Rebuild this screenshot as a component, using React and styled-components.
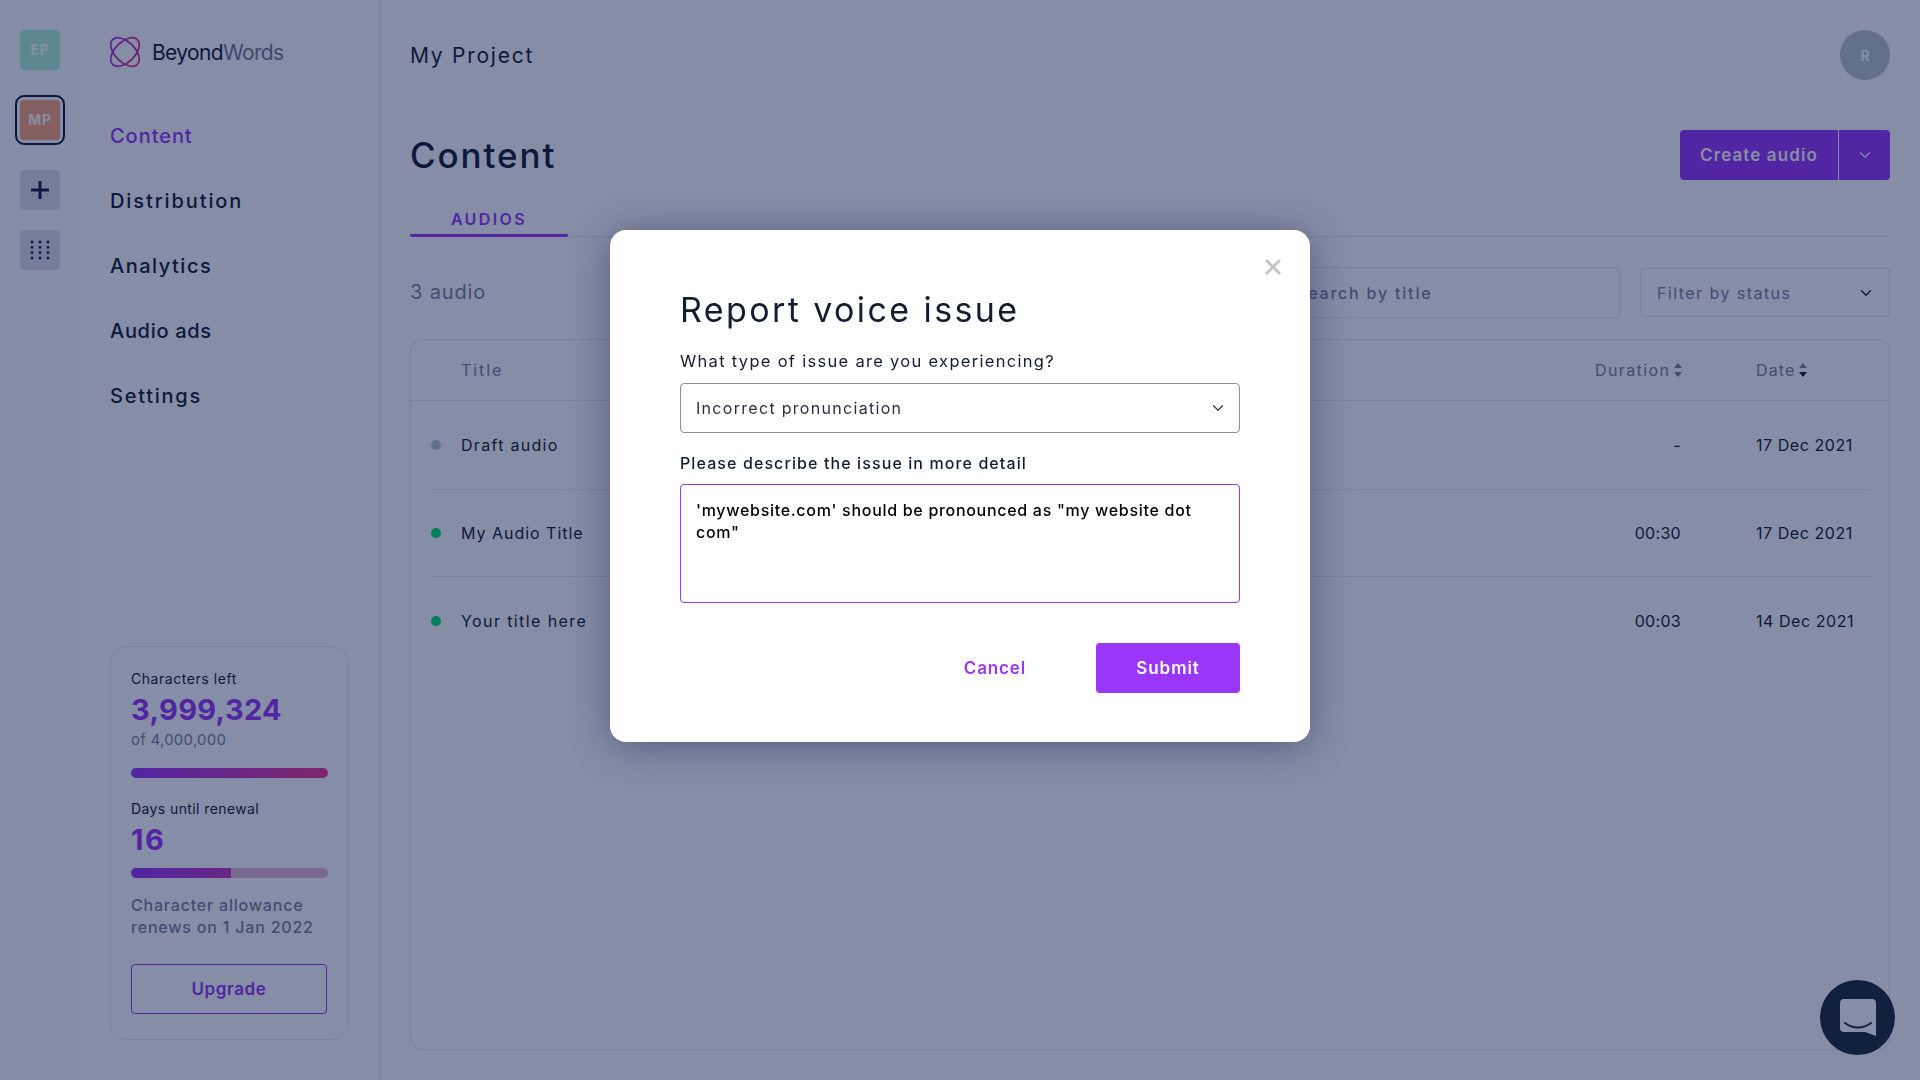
import React from "react";
import styled, { createGlobalStyle } from "styled-components";
import { ChevronDown, X } from "lucide-react";

const FONT = `Inter, "Noto Sans", sans-serif`;
const DARK = "#141c30";
const GREY = "#7c829b";
const PURPLE = "#9a36f8";

const Global = createGlobalStyle`
  html, body { margin: 0; padding: 0; height: 100%; }
  body { font-family: ${FONT}; color: ${DARK}; background: #fff; }
  * { box-sizing: border-box; }
`;

const Page = styled.div`display: flex; width: 1920px; height: 1080px; overflow: hidden;`;

const Rail = styled.aside`
  width: 80px; flex: none; display: flex; flex-direction: column; align-items: center;
  padding-top: 30px; background: #fdfdfe;
`;
const Tile = styled.div`
  width: 40px; height: 40px; border-radius: 4px; display: flex; align-items: center; justify-content: center;
  background: ${p => p.$bg || "#e0e0ea"}; color: #fff; font-size: 14px; font-weight: 700; letter-spacing: .6px;
  margin-top: ${p => p.$mt || 0}px; padding-bottom: 1px;
  outline: ${p => (p.$selected ? `2px solid #0f1a3a` : "none")};
  outline-offset: 3px;
`;

const Side = styled.nav`
  width: 300px; flex: none; display: flex; flex-direction: column; padding: 36px 30px 40px 30px;
  border-right: 1px solid #e3e5ee;
`;
const Logo = styled.div`display: flex; align-items: center; gap: 12px; height: 32px;`;
const LogoText = styled.div`font-size: 21px; letter-spacing: -.64px; color: ${DARK}; span { color: #727896; }`;
const NavList = styled.div`display: flex; flex-direction: column; gap: 35px; margin-top: 53px;`;
const NavItem = styled.div`
  font-size: 20px; line-height: 30px; letter-spacing: ${p => p.$ls}px; font-weight: 450;
  color: ${p => (p.$active ? PURPLE : DARK)};
`;

const Usage = styled.section`
  margin-top: auto; width: 239px; height: 394px; border: 1px solid #e9eaf1; border-radius: 18px;
  padding: 22px 20px 0; display: flex; flex-direction: column;
`;
const UsageLabel = styled.div`
  font-size: 14px; line-height: 20px; color: ${DARK}; letter-spacing: ${p => p.$ls}px; margin-top: ${p => p.$mt || 0}px;
`;
const BigNum = styled.div`
  font-size: 29px; line-height: 36px; font-weight: 700; color: ${PURPLE}; letter-spacing: ${p => p.$ls}px; margin-top: ${p => p.$mt}px;
`;
const OfText = styled.div`font-size: 15px; line-height: 20px; color: ${GREY}; letter-spacing: .25px; margin-top: 2px;`;
const Track = styled.div`
  height: 10px; width: 197px; border-radius: 5px; overflow: hidden; margin-top: ${p => p.$mt}px;
  background: #e4b8d0;
`;
const Fill = styled.div`height: 100%; background: linear-gradient(90deg, #9a36f8 0, #f0388c 197px);`;
const RenewNote = styled.div`font-size: 16px; line-height: 22px; color: ${GREY}; font-weight: 500; letter-spacing: .8px; margin-top: 16px;`;
const Upgrade = styled.div`
  margin-top: 26px; width: 196px; height: 50px; border: 1px solid ${PURPLE}; border-radius: 4px;
  display: flex; align-items: center; justify-content: center; color: ${PURPLE}; font-size: 17px; font-weight: 600; letter-spacing: .6px;
`;

const Main = styled.main`flex: 1; min-width: 0; padding: 30px 30px 30px; display: flex; flex-direction: column;`;
const TopBar = styled.header`display: flex; justify-content: space-between; align-items: center; height: 50px;`;
const Project = styled.div`font-size: 21px; letter-spacing: 1.75px; color: ${DARK};`;
const Avatar = styled.div`
  width: 50px; height: 50px; border-radius: 50%; background: #bcc6ca; color: #fff; font-weight: 700; font-size: 14px;
  display: flex; align-items: center; justify-content: center;
`;
const HeadRow = styled.div`display: flex; justify-content: space-between; align-items: center; height: 50px; margin-top: 50px;`;
const H1 = styled.h1`margin: 0; font-size: 35px; font-weight: 500; letter-spacing: 1.9px; color: ${DARK};`;
const SplitButton = styled.div`
  display: flex; height: 50px; width: 210px; background: ${PURPLE}; border-radius: 4px; color: #fff; overflow: hidden;
`;
const SplitMain = styled.div`
  width: 159px; display: flex; align-items: center; justify-content: center; font-size: 17px; font-weight: 600; letter-spacing: 1.1px;
  border-right: 1px solid #fff;
`;
const SplitArrow = styled.div`flex: 1; display: flex; align-items: center; justify-content: center;`;

const Tabs = styled.div`display: flex; height: 37px; margin-top: 20px; border-bottom: 1px solid #e3e5ee;`;
const Tab = styled.div`
  width: 158px; height: 37px; text-align: center; font-size: 16px; line-height: 38px; font-weight: 600; letter-spacing: 2.4px;
  color: ${PURPLE}; border-bottom: 3px solid ${PURPLE}; border-radius: 0 0 2px 2px;
`;
const ToolRow = styled.div`display: flex; align-items: center; height: 51px; margin-top: 30px;`;
const Count = styled.div`font-size: 20px; color: ${GREY}; letter-spacing: .85px; margin-right: auto; padding-bottom: 2px;`;
const SearchBox = styled.div`
  width: 335px; height: 51px; border: 1px solid #e3e5ee; border-radius: 4px; padding: 0 10px; display: flex; align-items: center;
  font-size: 16px; font-weight: 500; letter-spacing: 1.8px; color: ${GREY};
`;
const FilterBox = styled.div`
  width: 250px; height: 49px; margin-left: 20px; border: 1px solid #e3e5ee; border-radius: 4px; padding: 0 14px 0 16px;
  display: flex; align-items: center; justify-content: space-between; font-size: 16px; letter-spacing: 1.45px; color: ${GREY};
  svg { color: ${DARK}; }
`;

const TableCard = styled.section`flex: 1; margin-top: 21px; border: 1px solid #e3e5ee; border-radius: 12px;`;
const HeadCells = styled.div`
  display: grid; grid-template-columns: 1fr 161px 133px; align-items: center; height: 61px; padding-left: 50px;
  border-bottom: 1px solid #e9eaf1; font-size: 16px; color: ${GREY};
`;
const HeadLabel = styled.div`letter-spacing: ${p => p.$ls}px;`;
const SortWrap = styled.div`display: flex; align-items: center; gap: 4px;`;
const Row = styled.div`
  display: grid; grid-template-columns: 30px 1fr 161px 115px; align-items: center; height: ${p => p.$h}px;
  margin: 0 18px 0 20px;
  border-bottom: ${p => (p.$last ? "none" : "1px solid #e9eaf1")};
  font-size: 16px; color: ${DARK};
`;
const Dot = styled.span`width: 10px; height: 10px; border-radius: 50%; background: ${p => (p.$on ? "#00e06c" : "#bcc6ca")};`;
const RowTitle = styled.div`letter-spacing: ${p => p.$ls}px;`;
const Duration = styled.div`text-align: right; padding-right: 75px; letter-spacing: .3px;`;
const DateCell = styled.div`letter-spacing: .55px; white-space: nowrap;`;

const Overlay = styled.div`
  position: fixed; inset: 0; background: rgba(6, 20, 71, .485); display: flex; justify-content: center; align-items: flex-start; padding-top: 230px;
`;
const Modal = styled.div`
  position: relative; width: 700px; height: 512px; background: #fff; border-radius: 16px; padding: 58px 70px 0;
  box-shadow: 0 4px 40px rgba(6, 20, 71, .4);
`;
const Close = styled.div`position: absolute; top: 25px; right: 25px; width: 24px; height: 24px; color: #c4c4c4; display: flex;`;
const Title = styled.h2`margin: 0; font-size: 34px; line-height: 44px; font-weight: 400; letter-spacing: 2.4px; color: ${DARK};`;
const Question = styled.div`font-size: 16.5px; line-height: 22px; letter-spacing: 1.3px; margin-top: 18px; color: ${DARK};`;
const SelectBox = styled.div`
  margin-top: 11px; height: 50px; border: 1px solid #8d8f99; border-radius: 4px; padding: 0 12px 0 12px;
  display: flex; align-items: center; justify-content: space-between; font-size: 16px; letter-spacing: 1.3px; color: #2b3040;
`;
const SelectText = styled.span`padding-left: 3px;`;
const FieldLabel = styled.label`display: block; font-size: 16px; line-height: 22px; font-weight: 500; letter-spacing: 1.1px; margin-top: 19px; color: ${DARK};`;
const Area = styled.textarea`
  display: block; width: 100%; height: 119px; margin-top: 10px; padding: 14px 15px; border: 1px solid ${PURPLE}; border-radius: 4px;
  font-family: ${FONT}; font-size: 16px; line-height: 22px; font-weight: 500; letter-spacing: .7px; color: #000; resize: none; outline: none;
`;
const Actions = styled.div`display: flex; justify-content: flex-end; align-items: center; margin-top: 40px;`;
const Cancel = styled.div`color: ${PURPLE}; font-size: 17px; font-weight: 600; letter-spacing: .85px; margin-right: 70px;`;
const Submit = styled.div`
  width: 144px; height: 50px; border-radius: 4px; background: ${PURPLE}; color: #fff; display: flex; align-items: center; justify-content: center;
  font-size: 17px; font-weight: 600; letter-spacing: .95px;
`;
const Chat = styled.div`
  position: fixed; left: 1820px; top: 980px; width: 75px; height: 75px; border-radius: 50%; background: #12203f;
  display: flex; align-items: center; justify-content: center;
`;

const LogoMark = () => (
  <svg width="30" height="30" viewBox="0 0 30 30" fill="none" overflow="visible">
    <defs>
      <linearGradient id="lg" x1="0" y1="0" x2="30" y2="30" gradientUnits="userSpaceOnUse">
        <stop offset="0" stopColor="#9a36f8" />
        <stop offset="1" stopColor="#f0306a" />
      </linearGradient>
    </defs>
    <ellipse cx="15" cy="15" rx="17.5" ry="10" transform="rotate(45 15 15)" stroke="url(#lg)" strokeWidth="1.7" />
    <ellipse cx="15" cy="15" rx="17.5" ry="10" transform="rotate(-45 15 15)" stroke="url(#lg)" strokeWidth="1.7" />
  </svg>
);

const PlusIcon = () => (
  <svg width="18" height="18" viewBox="0 0 18 18" fill="#12203f">
    <rect x="7.5" y="0" width="3" height="18" />
    <rect x="0" y="7.500" width="18" height="3" />
  </svg>
);

const GridIcon = () => (
  <svg width="20" height="20" viewBox="0 0 20 20" fill="#12203f">
    {[2, 7.3, 12.6, 18].flatMap(y => [2, 10, 18].map(x => <rect key={`${x}-${y}`} x={x - 1.25} y={y - 1.25} width="2.5" height="2.5" />))}
  </svg>
);

const Sort = ({ active }) => (
  <svg width="8" height="14" viewBox="0 0 8 14">
    <path d="M4 0 8 5H0Z" fill={GREY} />
    <path d="M4 14 0 9h8Z" fill={active ? DARK : GREY} />
  </svg>
);

const navItems = [
  { label: "Content", ls: 0.95, active: true },
  { label: "Distribution", ls: 1.9 },
  { label: "Analytics", ls: 1.5 },
  { label: "Audio ads", ls: 0.7 },
  { label: "Settings", ls: 1.75 },
];

const rows = [
  { title: "Draft audio", ls: 1.3, on: false, dur: "-", date: "17 Dec 2021", h: 89 },
  { title: "My Audio Title", ls: 0.98, on: true, dur: "00:30", date: "17 Dec 2021", h: 87 },
  { title: "Your title here", ls: 1.4, on: true, dur: "00:03", date: "14 Dec 2021", h: 87, last: true },
];

export default function App() {
  return (
    <Page>
      <Global />
      <Rail>
        <Tile $bg="#b2f5d7">EP</Tile>
        <Tile $bg="#ffa778" $selected $mt={30}>MP</Tile>
        <Tile $mt={30}><PlusIcon /></Tile>
        <Tile $mt={20}><GridIcon /></Tile>
      </Rail>
      <Side>
        <Logo>
          <LogoMark />
          <LogoText>Beyond<span>Words</span></LogoText>
        </Logo>
        <NavList>
          {navItems.map(n => <NavItem key={n.label} $active={n.active} $ls={n.ls}>{n.label}</NavItem>)}
        </NavList>
        <Usage>
          <UsageLabel $ls={0.55}>Characters left</UsageLabel>
          <BigNum $ls={0.3} $mt={3}>3,999,324</BigNum>
          <OfText>of 4,000,000</OfText>
          <Track $mt={18}><Fill style={{ width: "100%" }} /></Track>
          <UsageLabel $ls={0.4} $mt={21}>Days until renewal</UsageLabel>
          <BigNum $ls={1.5} $mt={3}>16</BigNum>
          <Track $mt={10}><Fill style={{ width: "51%" }} /></Track>
          <RenewNote>Character allowance renews on 1 Jan 2022</RenewNote>
          <Upgrade>Upgrade</Upgrade>
        </Usage>
      </Side>
      <Main>
        <TopBar>
          <Project>My Project</Project>
          <Avatar>R</Avatar>
        </TopBar>
        <HeadRow>
          <H1>Content</H1>
          <SplitButton>
            <SplitMain>Create audio</SplitMain>
            <SplitArrow><ChevronDown size={18} strokeWidth={1.5} /></SplitArrow>
          </SplitButton>
        </HeadRow>
        <Tabs><Tab>AUDIOS</Tab></Tabs>
        <ToolRow>
          <Count>3 audio</Count>
          <SearchBox>Search by title</SearchBox>
          <FilterBox>Filter by status<ChevronDown size={18} strokeWidth={1.75} /></FilterBox>
        </ToolRow>
        <TableCard>
          <HeadCells>
            <HeadLabel $ls={1.9}>Title</HeadLabel>
            <SortWrap><HeadLabel $ls={1.4}>Duration</HeadLabel><Sort /></SortWrap>
            <SortWrap><HeadLabel $ls={1.1}>Date</HeadLabel><Sort active /></SortWrap>
          </HeadCells>
          {rows.map(r => (
            <Row key={r.title} $h={r.h} $last={r.last}>
              <Dot $on={r.on} />
              <RowTitle $ls={r.ls}>{r.title}</RowTitle>
              <Duration>{r.dur}</Duration>
              <DateCell>{r.date}</DateCell>
            </Row>
          ))}
        </TableCard>
      </Main>
      <Overlay>
        <Modal>
          <Close><X size={24} strokeWidth={3} /></Close>
          <Title>Report voice issue</Title>
          <Question>What type of issue are you experiencing?</Question>
          <SelectBox><SelectText>Incorrect pronunciation</SelectText><ChevronDown size={18} strokeWidth={1.5} /></SelectBox>
          <FieldLabel>Please describe the issue in more detail</FieldLabel>
          <Area readOnly value={`'mywebsite.com' should be pronounced as "my website dot com"`} />
          <Actions>
            <Cancel>Cancel</Cancel>
            <Submit>Submit</Submit>
          </Actions>
        </Modal>
      </Overlay>
      <Chat>
        <svg width="38" height="40" viewBox="0 0 38 40">
          <path d="M5 1h28a4 4 0 0 1 4 4v33l-11-4H5a4 4 0 0 1-4-4V5a4 4 0 0 1 4-4Z" fill="#868da6" />
          <path d="M6 25c4 3 8 4.500 13 4.500S28 28 32 25" fill="none" stroke="#12203f" strokeWidth="2" strokeLinecap="round" />
        </svg>
      </Chat>
    </Page>
  );
}
